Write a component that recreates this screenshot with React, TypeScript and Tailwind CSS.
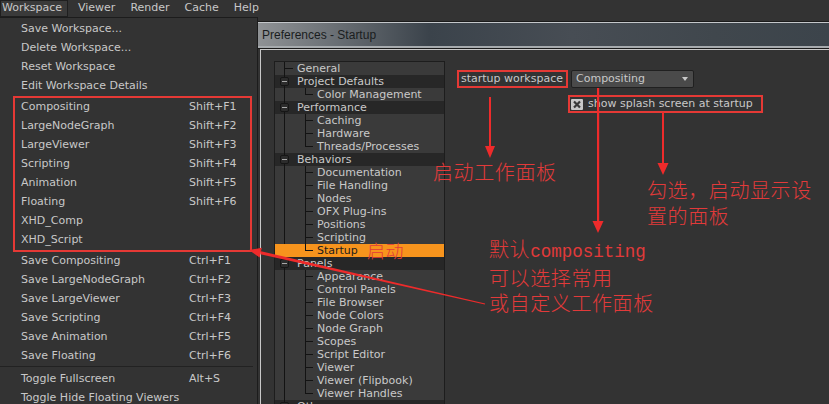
import React from 'react';
import clsx from 'clsx';

const topItems = ['Save Workspace...', 'Delete Workspace...', 'Reset Workspace', 'Edit Workspace Details'];

const layouts: [string, string][] = [
  ['Compositing', 'Shift+F1'],
  ['LargeNodeGraph', 'Shift+F2'],
  ['LargeViewer', 'Shift+F3'],
  ['Scripting', 'Shift+F4'],
  ['Animation', 'Shift+F5'],
  ['Floating', 'Shift+F6'],
  ['XHD_Comp', ''],
  ['XHD_Script', ''],
];

const saves: [string, string][] = [
  ['Save Compositing', 'Ctrl+F1'],
  ['Save LargeNodeGraph', 'Ctrl+F2'],
  ['Save LargeViewer', 'Ctrl+F3'],
  ['Save Scripting', 'Ctrl+F4'],
  ['Save Animation', 'Ctrl+F5'],
  ['Save Floating', 'Ctrl+F6'],
];

type TreeRow = { label: string; kind: 'leaf' | 'group' | 'child'; last?: boolean; selected?: boolean };

const tree: TreeRow[] = [
  { label: 'General', kind: 'leaf' },
  { label: 'Project Defaults', kind: 'group' },
  { label: 'Color Management', kind: 'child', last: true },
  { label: 'Performance', kind: 'group' },
  { label: 'Caching', kind: 'child' },
  { label: 'Hardware', kind: 'child' },
  { label: 'Threads/Processes', kind: 'child', last: true },
  { label: 'Behaviors', kind: 'group' },
  { label: 'Documentation', kind: 'child' },
  { label: 'File Handling', kind: 'child' },
  { label: 'Nodes', kind: 'child' },
  { label: 'OFX Plug-ins', kind: 'child' },
  { label: 'Positions', kind: 'child' },
  { label: 'Scripting', kind: 'child' },
  { label: 'Startup', kind: 'child', last: true, selected: true },
  { label: 'Panels', kind: 'group' },
  { label: 'Appearance', kind: 'child' },
  { label: 'Control Panels', kind: 'child' },
  { label: 'File Browser', kind: 'child' },
  { label: 'Node Colors', kind: 'child' },
  { label: 'Node Graph', kind: 'child' },
  { label: 'Scopes', kind: 'child' },
  { label: 'Script Editor', kind: 'child' },
  { label: 'Viewer', kind: 'child' },
  { label: 'Viewer (Flipbook)', kind: 'child' },
  { label: 'Viewer Handles', kind: 'child', last: true },
  { label: 'Other', kind: 'group' },
];

function MenuRow({ label, shortcut }: { label: string; shortcut?: string }) {
  return (
    <div className="flex h-[19px] items-center pl-[21px] whitespace-nowrap">
      <span className="w-[168px]">{label}</span>
      {shortcut && <span>{shortcut}</span>}
    </div>
  );
}

function TreeItem({ row }: { row: TreeRow }) {
  const { label, kind, last, selected } = row;
  return (
    <div
      className={clsx(
        'relative h-[13px] leading-[14px] whitespace-nowrap',
        selected ? 'bg-[#f7941d] text-[#1c1c1c]' : 'text-[#c9c9c9]',
        kind === 'group' && 'bg-[#272727]',
        kind === 'child' ? 'pl-[42px]' : 'pl-[22px]'
      )}
    >
      {!selected && <div className="absolute left-[9px] top-0 h-full w-px bg-[#131313]" />}
      {kind === 'leaf' && <div className="absolute left-[9px] top-[6px] h-px w-[9px] bg-[#131313]" />}
      {kind === 'group' && (
        <div className="absolute left-[5px] top-[2px] flex h-[9px] w-[9px] items-center justify-center rounded-[2px] border border-[#161616] bg-[#2c2c2c]">
          <div className="h-px w-[5px] bg-[#a8a8a8]" />
        </div>
      )}
      {kind === 'child' && (
        <>
          <div className={clsx('absolute left-[30px] top-0 w-px bg-[#131313]', last ? 'h-[7px]' : 'h-full')} />
          <div className="absolute left-[30px] top-[6px] h-px w-[8px] bg-[#131313]" />
        </>
      )}
      {label}
    </div>
  );
}

export default function App() {
  return (
    <div
      className="relative h-[404px] w-[829px] overflow-hidden bg-[#333333] text-[11px] text-[#c8c8c8]"
      style={{ fontFamily: '"DejaVu Sans", sans-serif' }}
    >
      {/* menu bar */}
      <div className="flex h-[17px] items-center whitespace-nowrap">
        <div className="flex h-[17px] w-[68px] items-center border border-[#1f1f1f] bg-[#3a3a3a] pl-[1px]">Workspace</div>
        <span className="ml-[10px]">Viewer</span>
        <span className="ml-[15px]">Render</span>
        <span className="ml-[15px]">Cache</span>
        <span className="ml-[15px]">Help</span>
      </div>

      <div className="flex h-[387px]">
        {/* dropdown menu */}
        <div className="w-[258px] shrink-0 border-t border-r border-[#1c1c1c] bg-[#333333] pt-[2px]">
          {topItems.map((t) => (
            <MenuRow key={t} label={t} />
          ))}
          <div className="ml-[13px] w-[239px] border-2 border-[#e53935]">
            {layouts.map(([l, s]) => (
              <div key={l} className="flex h-[19px] items-center pl-[6px] whitespace-nowrap">
                <span className="w-[168px]">{l}</span>
                {s && <span>{s}</span>}
              </div>
            ))}
          </div>
          {saves.map(([l, s]) => (
            <MenuRow key={l} label={l} shortcut={s} />
          ))}
          <div className="flex h-[4px] items-start">
            <div className="h-px w-[253px] bg-[#222222]" />
          </div>
          <MenuRow label="Toggle Fullscreen" shortcut="Alt+S" />
          <MenuRow label="Toggle Hide Floating Viewers" />
        </div>

        {/* preferences dialog */}
        <div className="flex min-w-0 flex-1 flex-col pt-[4px]">
          <div className="border-t border-[#1b1b1b]">
            <div
              className="flex h-[26px] items-center border-t border-b-2 border-t-[#c4c7ca] border-b-[#a7abae] bg-[linear-gradient(90deg,#8f9295_0%,#6e7378_12%,#3b434b_30%,#474d54_55%,#40474d_80%,#3c444b_100%)] pl-[4px] text-[12px] text-[#1a1d20]"
              style={{ fontFamily: '"Liberation Sans", sans-serif' }}
            >
              Preferences - Startup
            </div>
          </div>
          <div className="border-t border-[#1a1a1a]" />
          <div className="ml-[2px] flex flex-1 items-start border-t border-l border-[#c9c9c9] pl-[13px] pt-[11px]">
            {/* tree */}
            <div className="h-[360px] w-[171px] shrink-0 overflow-hidden border border-[#1d1d1d] bg-[#3a3a3a]">
              {tree.map((r) => (
                <TreeItem key={r.label} row={r} />
              ))}
            </div>

            {/* settings */}
            <div className="ml-[12px] mt-[9px] flex flex-col whitespace-nowrap">
              <div className="flex items-center">
                <div className="flex h-[18px] w-[111px] items-center border-2 border-[#e53935] pl-[2px]">startup workspace</div>
                <div className="ml-[3px] flex h-[18px] w-[123px] items-center justify-between rounded-[2px] border border-[#202020] bg-[#4a4a4a] pl-[4px] pr-[5px]">
                  <span>Compositing</span>
                  <svg width="6" height="4" viewBox="0 0 6 4">
                    <path d="M0 0 L6 0 L3 4 Z" fill="#c8c8c8" />
                  </svg>
                </div>
              </div>
              <div className="ml-[111px] mt-[7px] flex h-[18px] w-[195px] items-center border-2 border-[#e53935] pl-[1px]">
                <svg width="12" height="11" viewBox="0 0 12 11" className="shrink-0">
                  <rect x="0" y="0" width="12" height="11" rx="1" fill="#c9c9c9" />
                  <path d="M3 2.5 L9 8.5 M9 2.5 L3 8.5" stroke="#3a3a3a" strokeWidth="2.2" />
                </svg>
                <span className="ml-[5px]">show splash screen at startup</span>
              </div>
            </div>
          </div>
        </div>
      </div>

      {/* annotation arrows */}
      <svg className="pointer-events-none absolute left-0 top-0" width="829" height="404" viewBox="0 0 829 404">
        <g fill="#ee2b2b" stroke="none">
          <rect x="489" y="97" width="2" height="50" />
          <path d="M485 146 L495 146 L490 158 Z" />
          <rect x="597" y="88" width="2.2" height="134" />
          <path d="M592.5 221 L603.5 221 L598 233 Z" />
          <rect x="662" y="112" width="2" height="52" />
          <path d="M657.5 163 L668.5 163 L663 175 Z" />
          <path d="M261 251.2 L485.1 303.5 L484.9 304.5 L260.4 254.2 Z" />
          <path d="M249 250 L261.8 247.8 L259.6 257.6 Z" />
        </g>
      </svg>

      {/* annotation texts */}
      <div
        className="pointer-events-none absolute inset-0 text-[20px] font-light tracking-[0.6px] text-[#e23a3a]"
        style={{ fontFamily: '"Noto Sans CJK SC", sans-serif' }}
      >
        <div className="absolute left-[433px] top-[161px] leading-[22px]">启动工作面板</div>
        <div className="absolute left-[367px] top-[240px] text-[18px] leading-[20px]">启动</div>
        <div className="absolute left-[489px] top-[236px] leading-[25px]">
          <div>
            默认<span className="text-[17.5px] tracking-normal" style={{ fontFamily: '"Liberation Mono", monospace' }}>compositing</span>
          </div>
          <div>可以选择常用</div>
          <div>或自定义工作面板</div>
        </div>
        <div className="absolute left-[647px] top-[177px] leading-[26px]">
          <div>勾选，启动显示设</div>
          <div>置的面板</div>
        </div>
      </div>
    </div>
  );
}
